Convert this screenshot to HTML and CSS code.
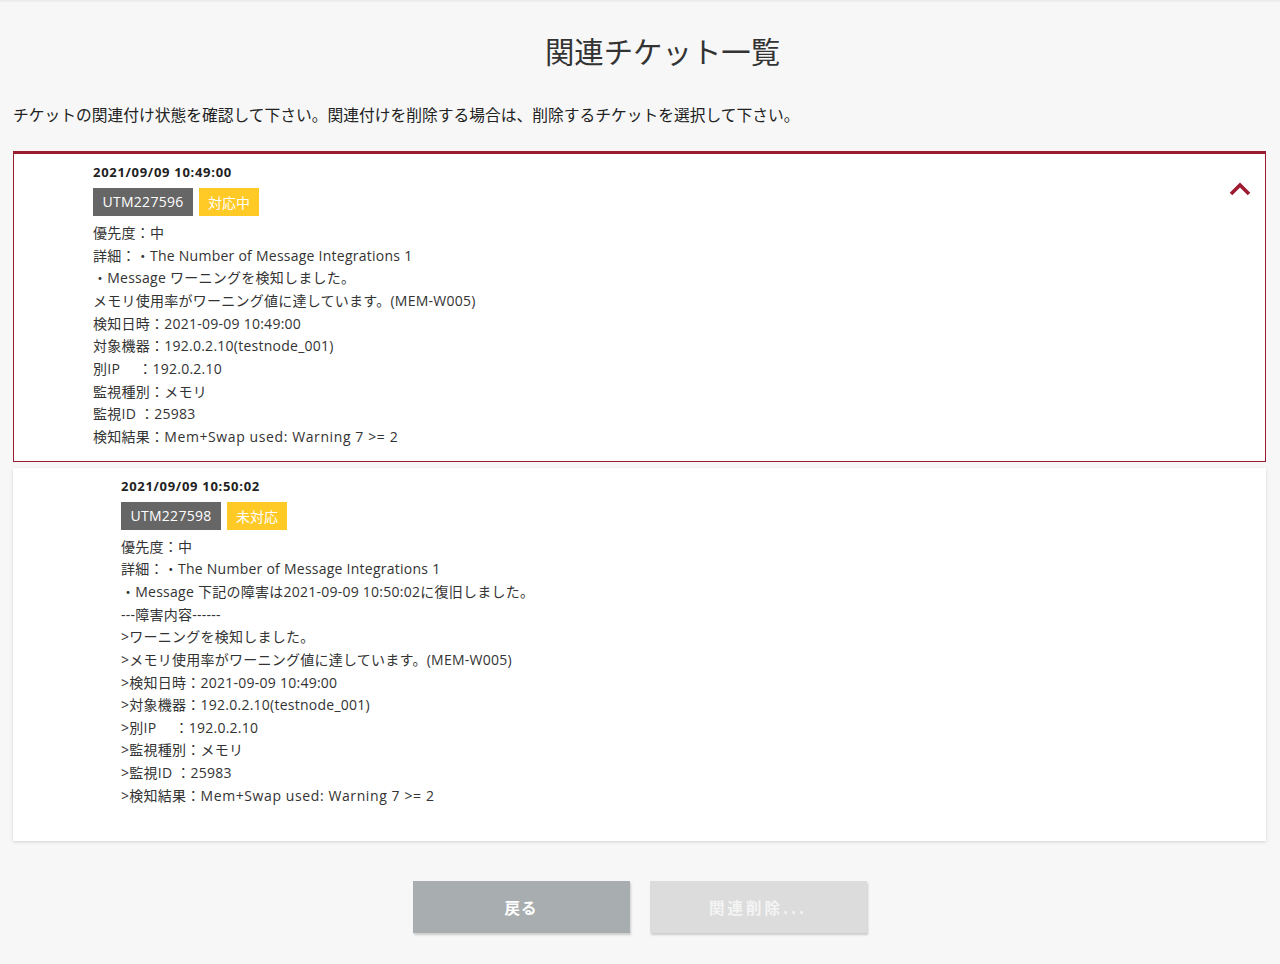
FILE: index.html
```html
<!DOCTYPE html>
<html lang="ja">
<head>
<meta charset="utf-8">
<title>関連チケット一覧</title>
<link rel="stylesheet" href="styles.css">
</head>
<body>
<div class="page">
  <h1 class="title">関連チケット一覧</h1>
  <p class="lead">チケットの関連付け状態を確認して下さい。関連付けを削除する場合は、削除するチケットを選択して下さい。</p>

  <div class="card card-selected">
    <div class="card-body">
      <div class="date">2021/09/09 10:49:00</div>
      <div class="badges"><span class="badge badge-id">UTM227596</span><span class="badge badge-status">対応中</span></div>
      <div class="lines">
        <div>優先度：中</div>
        <div>詳細：・The Number of Message Integrations 1</div>
        <div>・Message ワーニングを検知しました。</div>
        <div>メモリ使用率がワーニング値に達しています。(MEM-W005)</div>
        <div>検知日時：2021-09-09 10:49:00</div>
        <div>対象機器：192.0.2.10(testnode_001)</div>
        <div>別IP　 ：192.0.2.10</div>
        <div>監視種別：メモリ</div>
        <div>監視ID ：25983</div>
        <div>検知結果：<span class="wide">Mem+Swap used: Warning 7 &gt;= 2</span></div>
      </div>
    </div>
    <svg class="chevron" width="22" height="14" viewBox="0 0 22 14"><polyline points="2,12 11,3 20,12" fill="none" stroke="#9b1b30" stroke-width="3.6"/></svg>
  </div>

  <div class="card card-plain">
    <div class="card-body">
      <div class="date">2021/09/09 10:50:02</div>
      <div class="badges"><span class="badge badge-id">UTM227598</span><span class="badge badge-status">未対応</span></div>
      <div class="lines">
        <div>優先度：中</div>
        <div>詳細：・The Number of Message Integrations 1</div>
        <div>・Message 下記の障害は2021-09-09 10:50:02に復旧しました。</div>
        <div>---障害内容------</div>
        <div>&gt;ワーニングを検知しました。</div>
        <div>&gt;メモリ使用率がワーニング値に達しています。(MEM-W005)</div>
        <div>&gt;検知日時：2021-09-09 10:49:00</div>
        <div>&gt;対象機器：192.0.2.10(testnode_001)</div>
        <div>&gt;別IP　 ：192.0.2.10</div>
        <div>&gt;監視種別：メモリ</div>
        <div>&gt;監視ID ：25983</div>
        <div>&gt;検知結果：<span class="wide">Mem+Swap used: Warning 7 &gt;= 2</span></div>
      </div>
    </div>
  </div>

  <div class="actions">
    <button class="btn btn-back">戻る</button>
    <button class="btn btn-delete">関連削除...</button>
  </div>
</div>
</body>
</html>
```

FILE: styles.css
```css
html, body {
  margin: 0;
  padding: 0;
}
body {
  background: #f7f7f7;
  font-family: "Open Sans", "Noto Sans CJK JP", sans-serif;
  color: #333;
  box-shadow: inset 0 3px 3px -2px rgba(0,0,0,0.08);
  min-height: 964px;
}
.page {
  padding: 0 14px 0 13px;
}
.title {
  margin: 0;
  padding: 30px 0 0 46px;
  height: 40px;
  line-height: 40px;
  text-align: center;
  font-size: 29.4px;
  font-weight: normal;
  color: #333;
  font-family: "Noto Sans CJK JP", sans-serif;
}
.lead {
  margin: 0;
  padding-top: 34px;
  line-height: 22px;
  font-size: 15.75px;
  font-family: "Noto Sans CJK JP", sans-serif;
  color: #222;
}
.card {
  position: relative;
  background: #fff;
  box-sizing: border-box;
}
.card-selected {
  margin-top: 25px;
  border: 1px solid #9b1b30;
  border-top: 3px solid #9b1b30;
  padding: 8px 0 12px 79px;
}
.card-plain {
  margin-top: 6px;
  padding: 8px 0 34px 108px;
  box-shadow: 0 1px 3px rgba(0,0,0,0.15);
}
.date {
  font-size: 13px;
  font-weight: bold;
  line-height: 20px;
  color: #222;
  letter-spacing: 0.7px;
}
.badges {
  display: flex;
  gap: 6px;
  margin-top: 6px;
}
.badge {
  display: inline-block;
  height: 28px;
  line-height: 28px;
  padding: 0 9px;
  font-size: 14px;
  color: #fff;
  box-sizing: border-box;
  letter-spacing: 0.3px;
}
.badge-id {
  background: #666;
  min-width: 100px;
  text-align: center;
}
.badge-status {
  background: #ffc926;
  font-family: "Noto Sans CJK JP", sans-serif;
  letter-spacing: 0;
}
.lines {
  margin-top: 6px;
  font-size: 14px;
  line-height: 22.65px;
  color: #333;
  letter-spacing: 0.25px;
}
.lines div {
  white-space: pre;
}
.wide {
  letter-spacing: 0.6px;
}
.chevron {
  position: absolute;
  right: 14px;
  top: 28px;
}
.actions {
  display: flex;
  justify-content: center;
  gap: 20px;
  margin-top: 40px;
}
.btn {
  width: 217px;
  height: 52px;
  border: none;
  font-family: "Noto Sans CJK JP", sans-serif;
  font-size: 15.5px;
  font-weight: bold;
  color: #fff;
  box-shadow: 1px 2px 2px rgba(0,0,0,0.18);
  padding: 0;
}
.btn-back {
  background: #a8aeb0;
  letter-spacing: 1px;
}
.btn-delete {
  background: #dcdcdc;
  color: #f4f4f4;
  letter-spacing: 3px;
}
```
